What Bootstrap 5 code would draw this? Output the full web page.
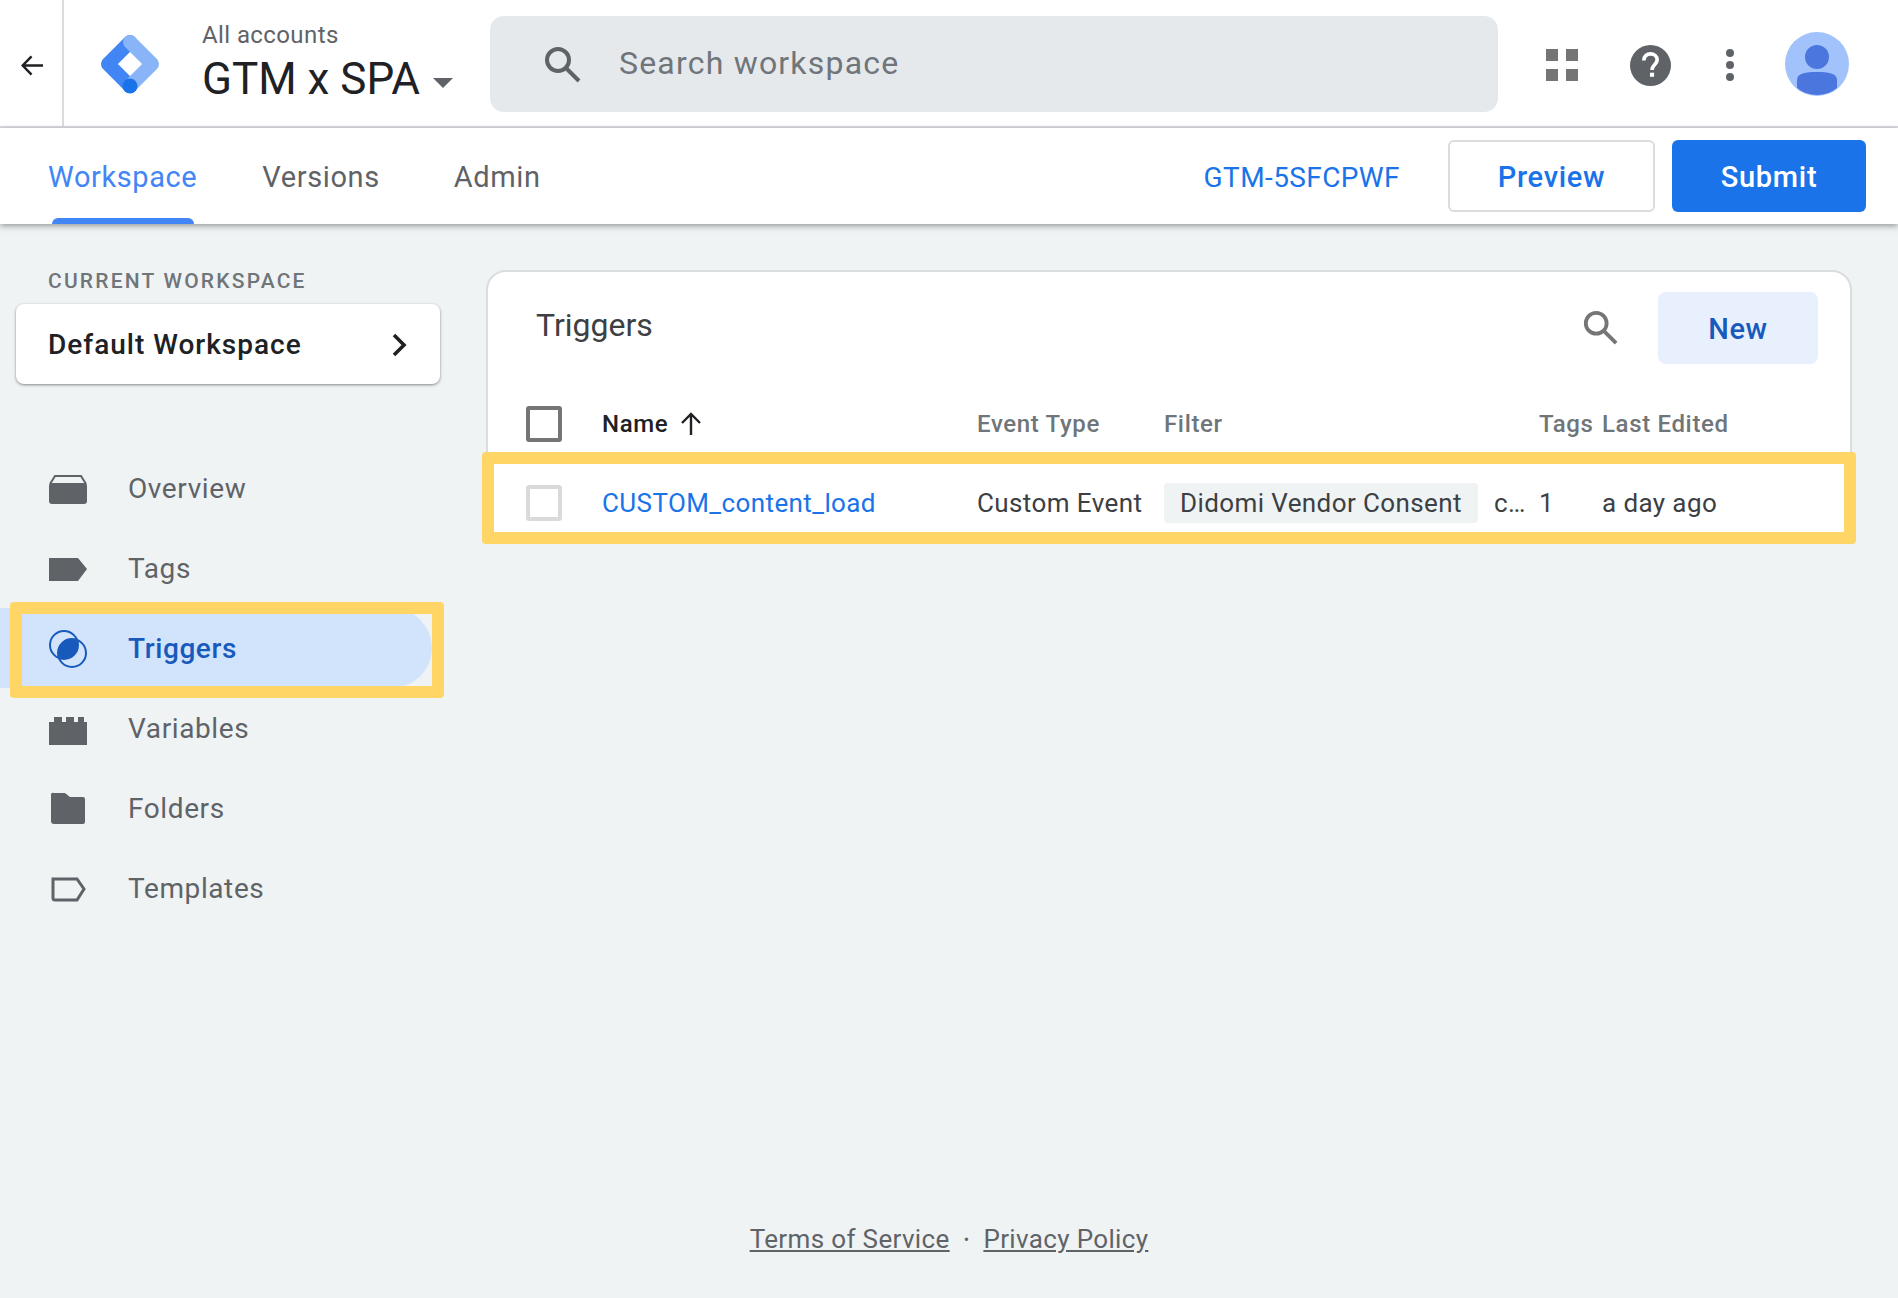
<!DOCTYPE html>
<html lang="en">
<head>
    <meta charset="UTF-8">
    <title>Triggers - GTM x SPA</title>
    <link href="https://cdn.jsdelivr.net/npm/bootstrap@5.3.0/dist/css/bootstrap.min.css" rel="stylesheet">
    <style>
        body { background: #eff3f4; font-family: Roboto, "Liberation Sans", sans-serif; color: #202124; height: 1298px; overflow: hidden; }
        .app-top { height: 128px; background: #fff; border-bottom: 2px solid #dadce0; }
        .back-cell { width: 64px; height: 126px; border-right: 2px solid #dadce0; padding-top: 4px; padding-left: 2px; }
        .logo-cell { width: 138px; padding-left: 36px; padding-top: 2px; }
        .acct-cell { width: 288px; }
        .acct-label { font-size: 24px; line-height: 28px; color: #5f6368; letter-spacing: .4px; margin-bottom: 4px; }
        .acct-name { font-size: 44px; line-height: 52px; color: #202124; }
        .caret { border-left: 10px solid transparent; border-right: 10px solid transparent; border-top: 10px solid #5f6368; margin-left: 13px; margin-top: 8px; }
        .search-box { width: 1008px; height: 96px; margin-top: 2px; background: #e5e9ec; border-radius: 14px; padding-left: 53px; gap: 38px; font-size: 32px; color: #70757a; letter-spacing: 1.2px; }
        .search-box span { margin-top: -2px; }
        .top-icons { margin-left: 20px; padding-top: 4px; }
        .icon-slot { width: 88px; }
        .icon-slot.thin { width: 72px; }
        .avatar-slot { margin-left: 19px; margin-top: -2px; }
        .app-tabs { height: 96px; background: #fff; box-shadow: 0 2px 6px rgba(60,64,67,.5); position: relative; padding-left: 48px; padding-right: 32px; }
        .tab-link { font-size: 29px; color: #5f6368; height: 96px; line-height: 98px; margin-right: 65px; position: relative; text-decoration: none; letter-spacing: .6px; }
        .tab-link.wider { margin-right: 74px; }
        .tab-link.on { color: #4285f4; }
        .tab-link.on::after { content: ""; position: absolute; left: 4px; right: 3px; bottom: 0; height: 6px; background: #4285f4; border-radius: 6px 6px 0 0; }
        .cont-id { font-size: 28px; color: #1a73e8; margin-right: 48px; padding-top: 4px; letter-spacing: .4px; }
        .btn-prev, .btn-send { height: 72px; font-size: 29px; font-weight: 500; border-radius: 6px; letter-spacing: .7px; padding-top: 10px; }
        .btn-prev { width: 207px; background: #fff; border: 2px solid #dadce0; color: #1a73e8; margin-right: 17px; }
        .btn-send { width: 194px; background: #1a73e8; border: 0; color: #fff; }
        .side-col { width: 486px; padding-top: 42px; }
        .side-head { font-size: 21px; line-height: 30px; font-weight: 500; color: #70757a; letter-spacing: 2.2px; padding-left: 48px; }
        .ws-card { width: 424px; height: 80px; margin: 8px 0 0 16px; padding: 2px 32px 0; background: #fff; border-radius: 8px; box-shadow: 0 1px 3px rgba(60,64,67,.6); font-size: 28px; font-weight: 500; color: #202124; letter-spacing: 1px; }
        .side-nav { margin-top: 64px; }
        .side-item { width: 432px; height: 80px; padding: 2px 0 0 49px; gap: 41px; font-size: 28px; color: #5f6368; text-decoration: none; letter-spacing: .6px; }
        .side-item.on { background: #d2e3fc; color: #185abc; border-radius: 0 40px 40px 0; font-weight: 500; position: relative; }
        .side-icon { width: 38px; height: 38px; flex: none; }
        .mark-ring { position: absolute; border: 12px solid #ffd666; border-radius: 4px; pointer-events: none; }
        .side-item .mark-ring { left: 10px; top: -6px; width: 434px; height: 96px; }
        .data-card { width: 1366px; height: 273px; background: #fff; border: 2px solid #dadce0; border-radius: 20px; position: relative; }
        .main-col { padding-top: 46px; }
        .data-head { height: 92px; padding-left: 48px; padding-right: 32px; }
        .data-title { font-size: 32px; color: #3c4043; margin-top: 14px; }
        .find-icon { margin-top: 18px; }
        .btn-new { width: 160px; height: 72px; padding-top: 10px; background: #e8f0fe; border: 0; border-radius: 8px; color: #185abc; font-size: 29px; font-weight: 500; letter-spacing: .6px; margin-left: 40px; margin-top: 20px; }
        .grid-row { display: grid; grid-template-columns: 76px 375px 187px 375px 63px 1fr; padding-left: 38px; align-items: center; }
        .grid-head { height: 88px; padding-top: 32px; font-size: 24px; font-weight: 500; color: #70757a; letter-spacing: .65px; }
        .grid-body { height: 91px; padding-top: 11px; color: #3c4043; font-size: 26px; letter-spacing: .4px; }
        .grid-body > div { white-space: nowrap; }
        .tick { width: 36px; height: 36px; border: 4px solid #757575; border-radius: 3px; }
        .grid-body .tick { border-color: #dadada; }
        .name-col { color: #202124; }
        .link-name { color: #1a73e8; text-decoration: none; }
        .chip-txt { background: #eff3f4; border-radius: 4px; padding: 5px 16px; margin-right: 16px; line-height: 30px; }
        .data-card .mark-ring { left: -6px; top: 180px; width: 1374px; height: 92px; }
        .foot-links { position: absolute; left: 0; right: 0; top: 1220px; gap: 14px; font-size: 26px; color: #5f6368; letter-spacing: .35px; }
        .foot-links a { color: #5f6368; }
        .foot-dot { font-size: 16px; }
    </style>
</head>
<body>

<header class="app-top d-flex align-items-center">
    <div class="back-cell d-flex align-items-center justify-content-center">
        <svg width="23" height="23" viewBox="0 0 24 24" fill="none" stroke="#202124" stroke-width="2.600"><path d="M23 12H2M11 2.500 1.800 12l9.200 9.500"/></svg>
    </div>
    <div class="logo-cell d-flex align-items-center">
        <svg width="60" height="60" viewBox="0 0 60 60" fill="none" stroke-width="14" stroke-linecap="round" stroke-linejoin="round">
            <path d="M30 8 8 30l22 22" stroke="#4285f4"/>
            <path d="M30 8 52 30 30 52" stroke="#8ab4f8"/>
            <circle cx="30" cy="52" r="7.500" fill="#1a73e8" stroke="none"/>
        </svg>
    </div>
    <div class="acct-cell">
        <div class="acct-label">All accounts</div>
        <div class="d-flex align-items-center">
            <span class="acct-name">GTM x SPA</span><span class="caret"></span>
        </div>
    </div>
    <div class="search-box d-flex align-items-center">
        <svg width="38" height="38" viewBox="0 0 38 38" fill="none" stroke="#5f6368" stroke-width="4"><circle cx="15" cy="15" r="11"/><path d="m23 23 13 13"/></svg>
        <span>Search workspace</span>
    </div>
    <div class="top-icons d-flex align-items-center">
        <div class="icon-slot d-flex justify-content-center">
            <svg width="32" height="32" viewBox="0 0 32 32" fill="#757575"><rect width="12" height="12"/><rect x="20" width="12" height="12"/><rect y="20" width="12" height="12"/><rect x="20" y="20" width="12" height="12"/></svg>
        </div>
        <div class="icon-slot d-flex justify-content-center">
            <svg width="41" height="41" viewBox="0 0 40 40"><circle cx="20" cy="20" r="20" fill="#5f6368"/><path d="M13.500 15c0-3.800 2.900-6.300 6.500-6.300s6.500 2.500 6.500 5.800c0 4.400-5 4.700-5 9.900" fill="none" stroke="#fff" stroke-width="3.600"/><rect x="19.500" y="27" width="4" height="4" fill="#fff"/></svg>
        </div>
        <div class="icon-slot thin d-flex justify-content-center">
            <svg width="8" height="32" viewBox="0 0 8 32" fill="#5f6368"><circle cx="4" cy="4" r="4"/><circle cx="4" cy="16" r="4"/><circle cx="4" cy="28" r="4"/></svg>
        </div>
        <div class="avatar-slot">
            <svg width="64" height="64" viewBox="0 0 64 64"><circle cx="32" cy="32" r="32" fill="#a1c2fa"/><circle cx="32" cy="25" r="12" fill="#4a76de"/><path d="M12 48c0-7 9-8 20-8s20 1 20 8v8a32 32 0 0 1-40 0z" fill="#4a76de"/></svg>
        </div>
    </div>
</header>

<nav class="app-tabs d-flex align-items-center">
    <a class="tab-link on" href="#">Workspace</a>
    <a class="tab-link wider" href="#">Versions</a>
    <a class="tab-link" href="#">Admin</a>
    <span class="cont-id ms-auto">GTM-5SFCPWF</span>
    <button class="btn btn-prev">Preview</button>
    <button class="btn btn-send">Submit</button>
</nav>

<div class="d-flex">
    <aside class="side-col">
        <div class="side-head">CURRENT WORKSPACE</div>
        <div class="ws-card d-flex align-items-center justify-content-between">
            <span>Default Workspace</span>
            <svg width="16" height="24" viewBox="0 0 16 24" fill="none" stroke="#202124" stroke-width="3.600"><path d="m2 2 10 10L2 22"/></svg>
        </div>
        <div class="side-nav d-flex flex-column">
            <a class="side-item d-flex align-items-center" href="#">
                <svg class="side-icon" viewBox="0 0 38 38" fill="#5f6368"><path d="M1 14 6 6h26l5 8" fill="none" stroke="#5f6368" stroke-width="2"/><rect y="13" width="38" height="21" rx="3"/></svg>
                <span>Overview</span>
            </a>
            <a class="side-item d-flex align-items-center" href="#">
                <svg class="side-icon" viewBox="0 0 38 38" fill="#5f6368"><path d="M0 8h29l9 11-9 12H0z"/></svg>
                <span>Tags</span>
            </a>
            <a class="side-item on d-flex align-items-center" href="#">
                <svg class="side-icon" viewBox="0 0 38 38" fill="none" stroke="#185abc" stroke-width="2"><circle cx="15" cy="15" r="14"/><circle cx="23" cy="23" r="14"/><path d="M9 23C9 15 15 9 23 9 29 9 29 15 29 15 29 23 23 29 15 29 9 29 9 23 9 23z" fill="#185abc" stroke="none"/></svg>
                <span>Triggers</span>
                <span class="mark-ring"></span>
            </a>
            <a class="side-item d-flex align-items-center" href="#">
                <svg class="side-icon" viewBox="0 0 38 38" fill="#5f6368"><path d="M0 35V12h5V7h8v5h4V7h8v5h4V7h6v5h3v23z"/></svg>
                <span>Variables</span>
            </a>
            <a class="side-item d-flex align-items-center" href="#">
                <svg class="side-icon" viewBox="0 0 38 38" fill="#5f6368"><path d="M5 3h11l5 4h13a2 2 0 0 1 2 2v23a2 2 0 0 1-2 2H5a3 3 0 0 1-3-3V5a2 2 0 0 1 3-2z"/></svg>
                <span>Folders</span>
            </a>
            <a class="side-item d-flex align-items-center" href="#">
                <svg class="side-icon" viewBox="0 0 38 38" fill="none" stroke="#5f6368" stroke-width="3"><path d="M4 9h24l7 10-7 11H6a2 2 0 0 1-2-2z"/></svg>
                <span>Templates</span>
            </a>
        </div>
    </aside>

    <main class="main-col">
        <div class="data-card">
            <div class="data-head d-flex align-items-center justify-content-between">
                <span class="data-title">Triggers</span>
                <div class="d-flex align-items-center">
                    <svg class="find-icon" width="36" height="36" viewBox="0 0 38 38" fill="none" stroke="#757575" stroke-width="4"><circle cx="15" cy="15" r="11"/><path d="m23 23 13 13"/></svg>
                    <button class="btn btn-new">New</button>
                </div>
            </div>
            <div class="grid-row grid-head">
                <div><div class="tick"></div></div>
                <div class="name-col d-flex align-items-center gap-2">Name
                    <svg class="ms-1" width="22" height="24" viewBox="0 0 22 24" fill="none" stroke="#202124" stroke-width="2.400"><path d="M11 23V2M2 11l9-9 9 9"/></svg>
                </div>
                <div>Event Type</div>
                <div>Filter</div>
                <div>Tags</div>
                <div>Last Edited</div>
            </div>
            <div class="grid-row grid-body">
                <div><div class="tick"></div></div>
                <div><a class="link-name" href="#">CUSTOM_content_load</a></div>
                <div>Custom Event</div>
                <div class="d-flex align-items-center"><span class="chip-txt">Didomi Vendor Consent</span><span>c…</span></div>
                <div>1</div>
                <div>a day ago</div>
            </div>
            <span class="mark-ring"></span>
        </div>
    </main>
</div>

<footer class="foot-links d-flex justify-content-center align-items-center">
    <a href="#">Terms of Service</a>
    <span class="foot-dot">&bull;</span>
    <a href="#">Privacy Policy</a>
</footer>

</body>
</html>
